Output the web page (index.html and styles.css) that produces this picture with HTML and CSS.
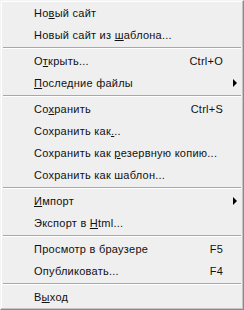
FILE: index.html
```html
<!DOCTYPE html>
<html lang="ru">
<head>
  <meta charset="UTF-8" />
  <title>Файл</title>
  <link rel="stylesheet" href="styles.css">
</head>
<body>
  <div class="menu">
    <div class="item"><span class="label">Но<u>в</u>ый сайт</span></div>
    <div class="item"><span class="label">Новый сайт из <u>ш</u>аблона...</span></div>
    <div class="sep"></div>
    <div class="item"><span class="label">О<u>т</u>крыть...</span><span class="key">Ctrl+O</span></div>
    <div class="item"><span class="label"><u>П</u>оследние файлы</span><span class="arrow"></span></div>
    <div class="sep"></div>
    <div class="item"><span class="label">Со<u>х</u>ранить</span><span class="key">Ctrl+S</span></div>
    <div class="item"><span class="label">Сохранить как<u>.</u>..</span></div>
    <div class="item"><span class="label">Сохранить как <u>р</u>езервную копию...</span></div>
    <div class="item"><span class="label">Сохранить как шаблон...</span></div>
    <div class="sep"></div>
    <div class="item"><span class="label"><u>И</u>мпорт</span><span class="arrow"></span></div>
    <div class="item"><span class="label">Экспорт в <u>H</u>tml...</span></div>
    <div class="sep"></div>
    <div class="item"><span class="label">Просмотр в браузере</span><span class="key">F5</span></div>
    <div class="item"><span class="label">Опубликовать...</span><span class="key">F4</span></div>
    <div class="sep"></div>
    <div class="item"><span class="label">В<u>ы</u>ход</span></div>
  </div>
</body>
</html>
```

FILE: styles.css
```css
body {
  margin: 0;
  background: #efefef;
}
.menu {
  box-sizing: border-box;
  width: 244px;
  height: 310px;
  display: flex;
  flex-direction: column;
  padding: 1px;
  background: #efefef;
  border-top: 1px solid #f4f4f4;
  border-left: 1px solid #f4f4f4;
  border-right: 1px solid #8a8a8a;
  border-bottom: 1px solid #8a8a8a;
  box-shadow: inset -1px -1px 0 #c4c4c4, inset 1px 1px 0 #ffffff;
  font-family: "Liberation Sans", Arial, sans-serif;
  font-size: 11px;
  letter-spacing: 0.25px;
  color: #111;
}
.item {
  display: flex;
  align-items: center;
  height: 22px;
  padding-left: 32px;
  padding-right: 19px;
  position: relative;
}
.label {
  flex: 1;
  white-space: nowrap;
}
.key {
  text-align: right;
}
.arrow {
  position: absolute;
  right: 5px;
  top: 7px;
  width: 0;
  height: 0;
  border-top: 4px solid transparent;
  border-bottom: 4px solid transparent;
  border-left: 4px solid #000;
}
.sep {
  height: 1px;
  margin: 1px 1px;
  background: #a8a8a8;
  border-bottom: 1px solid #ffffff;
}
```
